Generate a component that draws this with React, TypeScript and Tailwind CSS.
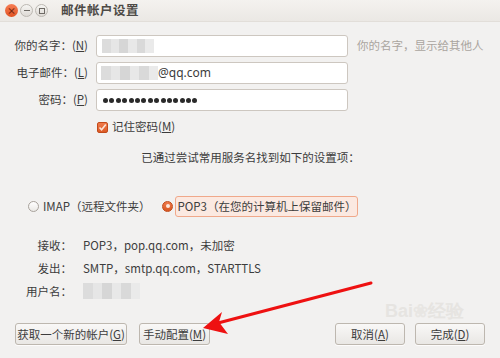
import React from "react";

const font = { fontFamily: '"Noto Sans CJK SC", "Noto Sans", sans-serif' };

function Blur({ w, className = "" }: { w: number; className?: string }) {
  return (
    <div className={`flex h-[14px] ${className}`} style={{ width: w }}>
      <div className="flex-1 bg-[#dcdcdc]" />
      <div className="flex-1 bg-[#e6e6e6]" />
      <div className="flex-1 bg-[#d6d6d6]" />
      <div className="flex-1 bg-[#e8e8e8]" />
      <div className="flex-1 bg-[#d9d9d9]" />
      <div className="flex-1 bg-[#eaeaea]" />
    </div>
  );
}

function Btn({ children, className = "" }: { children: React.ReactNode; className?: string }) {
  return (
    <div
      className={`h-[22px] flex items-center justify-center rounded-[3px] border border-[#bdb7af] bg-gradient-to-b from-[#f9f8f7] to-[#e9e7e4] text-[11.5px] text-[#3c3c3c] shadow-[0_1px_0_rgba(255,255,255,0.8)] ${className}`}
    >
      {children}
    </div>
  );
}

export default function App() {
  const dots = Array.from({ length: 15 });
  return (
    <div className="relative w-[500px] h-[358px] overflow-hidden bg-[#f2f1f0] text-[#3c3c3c]" style={font}>
      {/* title bar */}
      <div className="h-[22px] flex items-center bg-gradient-to-b from-[#f4f2ef] to-[#ebe8e4] border-b border-[#e2ded9]">
        <div className="ml-[5px] w-[13px] h-[13px] rounded-full bg-gradient-to-b from-[#f77e55] to-[#e0521f] flex items-center justify-center text-[9px] leading-none text-[#7a2a10] font-bold">×</div>
        <div className="ml-[2px] w-[13px] h-[13px] rounded-full border border-[#bcb8b2] bg-gradient-to-b from-[#f6f5f3] to-[#dedad5] flex items-center justify-center">
          <div className="w-[6px] h-[1px] bg-[#6e6a65]" />
        </div>
        <div className="ml-[2px] w-[13px] h-[13px] rounded-full border border-[#bcb8b2] bg-gradient-to-b from-[#f6f5f3] to-[#dedad5] flex items-center justify-center">
          <div className="w-[6px] h-[6px] border border-[#6e6a65]" />
        </div>
        <div className="ml-[13px] text-[12.5px] font-bold text-[#4e4b47] tracking-[0.5px]">邮件帐户设置</div>
      </div>

      {/* form rows */}
      <div className="pt-[13px] flex flex-col gap-[5px]">
        <div className="flex items-center h-[22px]">
          <div className="w-[88px] text-right text-[11.5px]">你的名字：(<span className="underline">N</span>)</div>
          <div className="ml-[8px] w-[252px] h-[22px] rounded-[3px] border border-[#cdc7c0] bg-white flex items-center pl-[5px]">
            <Blur w={52} />
          </div>
          <div className="ml-[9px] text-[11.5px] text-[#aaa59f]">你的名字，显示给其他人</div>
        </div>
        <div className="flex items-center h-[22px]">
          <div className="w-[88px] text-right text-[11.5px]">电子邮件：(<span className="underline">L</span>)</div>
          <div className="ml-[8px] w-[252px] h-[22px] rounded-[3px] border border-[#cdc7c0] bg-white flex items-center pl-[4px]">
            <Blur w={57} />
            <span className="text-[12px] text-[#3c3c3c]" style={{ fontFamily: '"Noto Sans", sans-serif' }}>@qq.com</span>
          </div>
        </div>
        <div className="flex items-center h-[22px]">
          <div className="w-[88px] text-right text-[11.5px]">密码：(<span className="underline">P</span>)</div>
          <div className="ml-[8px] w-[252px] h-[22px] rounded-[3px] border border-[#cdc7c0] bg-white flex items-center pl-[6px] gap-[1.4px]">
            {dots.map((_, i) => (
              <div key={i} className="w-[5px] h-[5px] rounded-full bg-[#2a2a2a]" />
            ))}
          </div>
        </div>
        <div className="flex items-center h-[20px] mt-[1px] pl-[97px]">
          <div className="w-[11px] h-[11px] rounded-[2px] bg-gradient-to-b from-[#ef7a4a] to-[#dc5a26] border border-[#c24a1a] flex items-center justify-center">
            <svg width="9" height="9" viewBox="0 0 9 9"><path d="M1.5 4.5 L3.6 6.8 L7.8 1.5" stroke="#fbe3d6" strokeWidth="1.6" fill="none" /></svg>
          </div>
          <span className="ml-[4px] text-[11.5px]">记住密码(<span className="underline">M</span>)</span>
        </div>
      </div>

      <div className="mt-[12px] text-center text-[11.5px] pl-[1px]">已通过尝试常用服务名找到如下的设置项：</div>

      {/* radios */}
      <div className="mt-[29px] flex items-center pl-[28px] h-[22px]">
        <div className="w-[11px] h-[11px] rounded-full border border-[#a8a29b] bg-gradient-to-b from-white to-[#ebe9e6]" />
        <span className="ml-[4px] text-[11.5px]">IMAP（远程文件夹）</span>
        <div className="ml-[12px] w-[11px] h-[11px] rounded-full bg-gradient-to-b from-[#ef7a4a] to-[#d9561f] border border-[#c04a1a] flex items-center justify-center">
          <div className="w-[4px] h-[4px] rounded-full bg-[#fde8dc]" />
        </div>
        <div className="ml-[2px] h-[21px] px-[1px] flex items-center rounded-[3px] border border-[#f0a88a] bg-[#fbe9e1] text-[11.5px]">POP3（在您的计算机上保留邮件）</div>
      </div>

      {/* info */}
      <div className="mt-[19px] flex flex-col gap-[5px] text-[11.5px]">
        <div className="flex items-center h-[18px]">
          <div className="w-[72px] text-right">接收：</div>
          <div className="ml-[11px]">POP3，pop.qq.com，未加密</div>
        </div>
        <div className="flex items-center h-[18px]">
          <div className="w-[72px] text-right">发出：</div>
          <div className="ml-[11px]">SMTP，smtp.qq.com，STARTTLS</div>
        </div>
        <div className="flex items-center h-[18px]">
          <div className="w-[72px] text-right">用户名：</div>
          <Blur w={57} className="ml-[11px] h-[16px]" />
        </div>
      </div>

      {/* buttons */}
      <div className="mt-[23px] flex items-center px-[15px]">
        <Btn className="w-[112px]">获取一个新的帐户(<span className="underline">G</span>)</Btn>
        <Btn className="ml-[12px] w-[71px]">手动配置(<span className="underline">M</span>)</Btn>
        <div className="flex-1" />
        <Btn className="w-[70px]">取消(<span className="underline">A</span>)</Btn>
        <Btn className="ml-[10px] w-[70px]">完成(<span className="underline">D</span>)</Btn>
      </div>

      {/* watermark */}
      <div className="absolute left-[385px] top-[302px] text-[18px] font-bold text-[#e6e4e1] leading-none pointer-events-none" style={{ fontFamily: '"Liberation Sans", sans-serif' }}>
        Bai<span className="text-[#e8e6e3]">❀</span>经验
      </div>

      {/* red arrow */}
      <svg className="absolute left-0 top-0 pointer-events-none" width="500" height="358" viewBox="0 0 500 358">
        <line x1="371" y1="283" x2="218" y2="323" stroke="#ee1111" strokeWidth="3" strokeLinecap="round" />
        <path d="M203 328 L222 312 L219 322 L228 334 Z" fill="#ee1111" />
      </svg>
    </div>
  );
}
